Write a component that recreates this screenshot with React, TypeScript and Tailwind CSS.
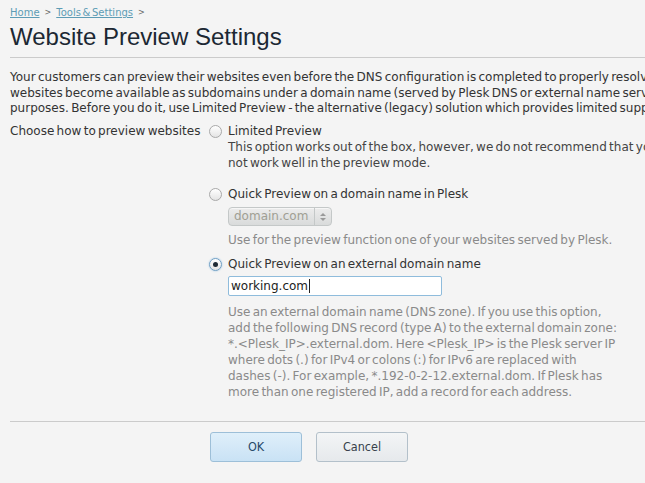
import React from "react";

function Radio({ checked }: { checked?: boolean }) {
  return (
    <span
      className={
        "relative flex h-[13px] w-[13px] shrink-0 items-center justify-center rounded-full border bg-gradient-to-b from-white to-[#e4e4e4] " +
        (checked
          ? "border-[#6f9fc4] shadow-[0_0_2px_#9cc3e4]"
          : "border-[#a9a9a9]")
      }
    >
      {checked && <span className="h-[5px] w-[5px] rounded-full bg-[#1e2a34]" />}
    </span>
  );
}

export default function App() {
  return (
    <div className="h-[483px] w-[645px] overflow-hidden bg-[#f4f4f4] font-['DejaVu_Sans',sans-serif] text-[12px] text-[#333] [word-spacing:-1.5px]">
      <div className="pl-[10px] pt-[6px]">
        <div className="flex items-center gap-[5px] text-[10px] leading-[14px] text-[#666]">
          <span className="text-[#5d9cb5] underline">Home</span>
          <span className="text-[8px]">&gt;</span>
          <span className="text-[#5d9cb5] underline">Tools &amp; Settings</span>
          <span className="text-[8px]">&gt;</span>
        </div>
        <h1 className="mt-[3px] whitespace-nowrap font-['Liberation_Sans',Arial,sans-serif] text-[24px] leading-[28px] text-[#1c2833] [word-spacing:0px]">
          Website Preview Settings
        </h1>
        <div className="mt-[6px] h-px bg-[#cbcbcb]" />

        <div className="mt-[12px] whitespace-nowrap leading-[15.5px]">
          <div>
            Your customers can preview their websites even before the DNS configuration is completed to properly resolve
          </div>
          <div>
            websites become available as subdomains under a domain name (served by Plesk DNS or external name server)
          </div>
          <div>
            purposes. Before you do it, use Limited Preview - the alternative (legacy) solution which provides limited support
          </div>
        </div>

        <div className="mt-[6.5px] flex leading-[16px]">
          <div className="w-[199px] shrink-0 whitespace-nowrap">Choose how to preview websites</div>
          <div className="flex flex-col">
            {/* Option 1 */}
            <div className="flex items-center gap-[6px]">
              <Radio />
              <span className="whitespace-nowrap">Limited Preview</span>
            </div>
            <div className="ml-[19px] whitespace-nowrap text-[#444]">
              <div>This option works out of the box, however, we do not recommend that you use it, as some websites may</div>
              <div>not work well in the preview mode.</div>
            </div>

            {/* Option 2 */}
            <div className="mt-[15px] flex items-center gap-[6px]">
              <Radio />
              <span className="whitespace-nowrap">Quick Preview on a domain name in Plesk</span>
            </div>
            <div className="ml-[19px] mt-[5px] flex h-[19px] w-[104px] items-center rounded-[4px] border border-[#c4c8c8] bg-gradient-to-b from-[#ececec] to-[#d9dbdb] shadow-[inset_0_1px_0_#f6f6f6]">
              <span className="flex-1 pl-[5px] leading-[17px] text-[#a09f94]">domain.com</span>
              <span className="flex h-full w-[17px] flex-col items-center justify-center gap-[2px] border-l border-[#c4c8c8]">
                <span className="h-0 w-0 border-x-[3px] border-b-[3px] border-x-transparent border-b-[#9a9a9a]" />
                <span className="h-0 w-0 border-x-[3px] border-t-[3px] border-x-transparent border-t-[#9a9a9a]" />
              </span>
            </div>
            <div className="ml-[19px] mt-[6px] whitespace-nowrap text-[#8a8a8a]">
              Use for the preview function one of your websites served by Plesk.
            </div>

            {/* Option 3 */}
            <div className="mt-[8px] flex items-center gap-[6px]">
              <Radio checked />
              <span className="whitespace-nowrap">Quick Preview on an external domain name</span>
            </div>
            <div className="ml-[19px] mt-[4px] flex h-[20px] w-[214px] items-center rounded-[2px] border border-[#8fbcdc] bg-white pl-[2px] text-[12px] text-[#222]">
              <span>working.com</span>
              <span className="ml-px h-[14px] w-px bg-[#222]" />
            </div>
            <div className="ml-[19px] mt-[8px] whitespace-nowrap text-[#8a8a8a]">
              <div>Use an external domain name (DNS zone). If you use this option,</div>
              <div>add the following DNS record (type A) to the external domain zone:</div>
              <div>*.&lt;Plesk_IP&gt;.external.dom. Here &lt;Plesk_IP&gt; is the Plesk server IP</div>
              <div>where dots (.) for IPv4 or colons (:) for IPv6 are replaced with</div>
              <div>dashes (-). For example, *.192-0-2-12.external.dom. If Plesk has</div>
              <div>more than one registered IP, add a record for each address.</div>
            </div>
          </div>
        </div>

        <div className="mt-[21px] h-px bg-[#cbcbcb]" />

        <div className="mt-[10px] flex gap-[14px] pl-[200px] font-['DejaVu_Sans_Condensed','DejaVu_Sans',sans-serif] text-[12.5px] [word-spacing:0px]">
          <button className="h-[30px] w-[92px] rounded-[3px] border border-[#9dbfd8] bg-gradient-to-b from-[#dfeffa] to-[#c9e2f5] text-[#27496a]">
            OK
          </button>
          <button className="h-[30px] w-[92px] rounded-[3px] border border-[#b3c0ca] bg-gradient-to-b from-[#f3f5f6] to-[#e6e9ec] text-[#37414b]">
            Cancel
          </button>
        </div>
      </div>
    </div>
  );
}
